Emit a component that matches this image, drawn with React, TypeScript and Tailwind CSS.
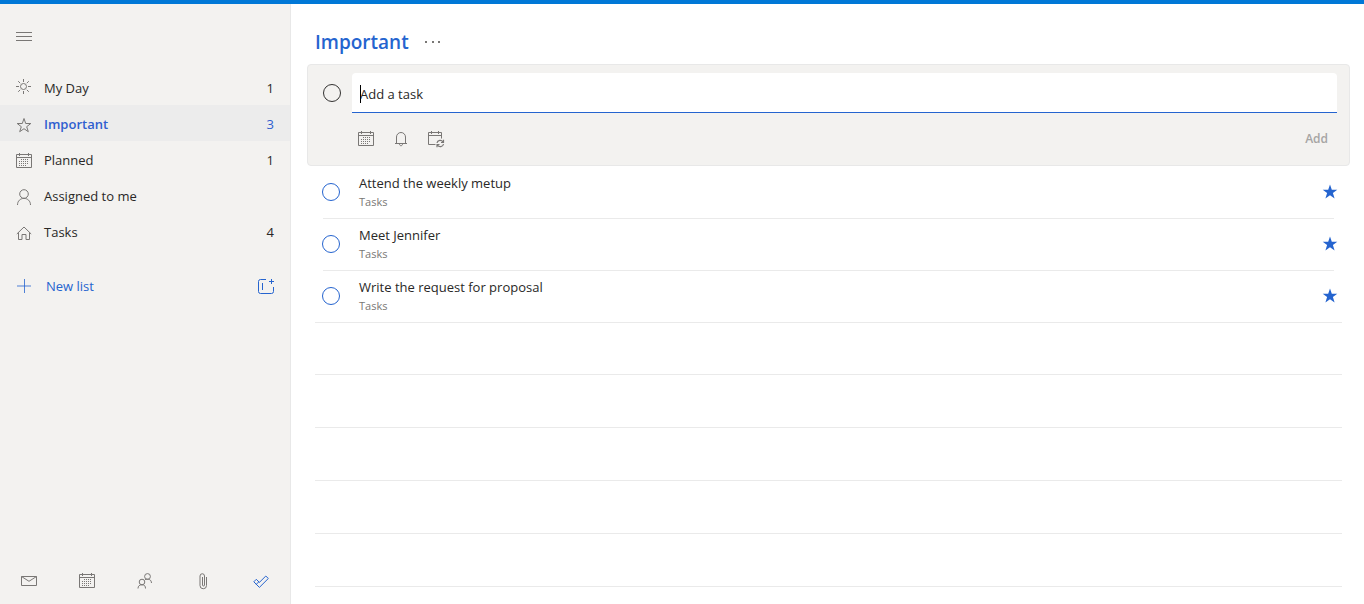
import { useState, ReactNode, FormEvent } from "react";

type ListItem = {
  name: string;
  count?: number;
  icon: ReactNode;
};

type Task = {
  title: string;
  list: string;
};

const DOTS = [
  [6, 6], [8, 6], [10, 6], [12, 6],
  [4, 8], [6, 8], [8, 8], [10, 8], [12, 8],
  [4, 10], [6, 10], [8, 10], [10, 10], [12, 10],
  [4, 12], [6, 12], [8, 12], [10, 12],
];

function Icon({ children }: { children: ReactNode }) {
  return (
    <svg
      width="16"
      height="16"
      viewBox="0 0 16 16"
      fill="none"
      stroke="currentColor"
      strokeWidth="1"
      className="shrink-0 overflow-visible"
      aria-hidden="true"
    >
      {children}
    </svg>
  );
}

const MenuIcon = () => (
  <Icon>
    <path d="M0 3.5h16M0 7.5h16M0 11.5h16" />
  </Icon>
);

const SunIcon = () => (
  <Icon>
    <circle cx="7.5" cy="5.5" r="3" />
    <path d="M7.5-2v3M7.5 10v3M0 5.5h3M12 5.5h3M2.2.2l2 2M10.8 8.8l2 2M12.8.2l-2 2M4.2 8.8l-2 2" />
  </Icon>
);

const StarIcon = () => (
  <Icon>
    <path d="M8 1.500l1.700 5h5.100l-4.100 3.200 1.600 5L8 11.700l-4.300 3 1.600-5-4.100-3.200h5.100z" />
  </Icon>
);

const CalendarIcon = () => (
  <Icon>
    <path d="M.5 1.5h15v13H.5zM.5 4.5h15M3.5 0v3M12.5 0v3" />
    <g fill="currentColor" stroke="none">
      {DOTS.map(([x, y]) => (
        <rect key={`${x}-${y}`} x={x - 1} y={y} width="1" height="1" />
      ))}
    </g>
  </Icon>
);

const PersonIcon = () => (
  <Icon>
    <circle cx="8" cy="5" r="4.3" />
    <path d="M1.5 16c0-4 2.8-6.6 6.5-6.6s6.5 2.6 6.5 6.6" />
  </Icon>
);

const HomeIcon = () => (
  <Icon>
    <path d="M.8 9L8 2l7.200 7M2.500 7.500v7h3.500v-5h4v5h3.500v-7" />
  </Icon>
);

const PlusIcon = () => (
  <Icon>
    <path d="M1 7h14" strokeOpacity=".8" />
    <path d="M8.500 0v14" strokeOpacity=".8" />
  </Icon>
);

const NewGroupIcon = () => (
  <Icon>
    <path d="M8 .5H2.500a2 2 0 0 0-2 2v10a2 2 0 0 0 2 2h11a2 2 0 0 0 2-2V8M4.500 4v7M13.500 0v5M11 2.500h5" />
  </Icon>
);

const BellIcon = () => (
  <Icon>
    <path d="M2 12.500h12M3.500 12.500V6a4.500 4.500 0 0 1 9 0v6.500M6.500 13c0 2.300 3 2.300 3 0" />
  </Icon>
);

const RepeatIcon = () => (
  <Icon>
    <path d="M7.500 13.500h-7v-12h13v6M.5 4.500h13M3.500 0v3M10.500 0v3" />
    <path
      d="M9 12c.5-3 4.500-3.500 6-1M15.500 8.800v2.700H13M15.500 13c-.5 3-4.500 3.500-6 1M9 16.200v-2.700h2.500"
      strokeWidth="1.200"
    />
  </Icon>
);

const MailIcon = () => (
  <Icon>
    <path d="M.5 3.500h15v9H.5zM.5 3.500L8 8.300l7.500-4.800" />
  </Icon>
);

const PeopleIcon = () => (
  <Icon>
    <circle cx="10.500" cy="3.500" r="2.900" />
    <path d="M8 6.500c3.500-1 6.300 0 6.500 3.500" />
    <circle cx="5" cy="9" r="2.800" />
    <path d="M1 15.500c0-2.600 1.600-3.700 4-3.700s3.500 1.100 3.500 3.700" />
  </Icon>
);

const ClipIcon = () => (
  <Icon>
    <path d="M11.500 4v8.500a3 3 0 0 1-6.500 0V3a2.200 2.200 0 0 1 4.500 0v9a1 1 0 0 1-2 0V4" />
  </Icon>
);

const CheckIcon = () => (
  <Icon>
    <path d="M.8 8.800l2.500-2.500 3.100 3.100 6.400-6.400 2.500 2.500-8.900 8.900zM3.300 11.300l2.600-2.600" />
  </Icon>
);

const FilledStar = () => (
  <svg width="16" height="16" viewBox="0 0 16 16" fill="currentColor" aria-hidden="true">
    <path d="M8 .5l1.800 5.300h5.500l-4.400 3.300 1.700 5.400L8 11.200l-4.600 3.300 1.700-5.400L.7 5.800h5.500z" />
  </svg>
);

const lists: ListItem[] = [
  { name: "My Day", count: 1, icon: <SunIcon /> },
  { name: "Important", count: 3, icon: <StarIcon /> },
  { name: "Planned", count: 1, icon: <CalendarIcon /> },
  { name: "Assigned to me", icon: <PersonIcon /> },
  { name: "Tasks", count: 4, icon: <HomeIcon /> },
];

const apps = [
  { name: "Mail", icon: <MailIcon /> },
  { name: "Calendar", icon: <CalendarIcon /> },
  { name: "People", icon: <PeopleIcon /> },
  { name: "Files", icon: <ClipIcon /> },
  { name: "To Do", icon: <CheckIcon />, active: true },
];

function Sidebar() {
  return (
    <aside className="flex w-[291px] shrink-0 flex-col border-r border-[#e8e8e8] bg-[#f3f2f0]">
      <div className="flex h-[65px] items-center px-4">
        <button aria-label="Toggle menu" className="text-[#797775]">
          <MenuIcon />
        </button>
      </div>

      <nav>
        {lists.map((item) => {
          const active = item.name === "Important";
          return (
            <a
              key={item.name}
              href="#"
              className={`flex h-9 items-center gap-3 px-4 pt-1 text-[13px] ${
                active ? "bg-[#ececec] text-[#2f5fd0]" : "text-[#292827]"
              }`}
            >
              <span className="text-[#797775]">{item.icon}</span>
              <span className={active ? "flex-1 font-semibold" : "flex-1"}>{item.name}</span>
              <span>{item.count}</span>
            </a>
          );
        })}
      </nav>

      <div className="mt-[18px] flex h-9 items-center justify-between px-4 pt-1 text-[#2564cf]">
        <button className="flex items-center gap-3.5 text-[13px]">
          <PlusIcon />
          New list
        </button>
        <button aria-label="New group">
          <NewGroupIcon />
        </button>
      </div>

      {/* App switcher */}
      <div className="mt-auto grid h-12 grid-cols-5 pt-0.5">
        {apps.map((app) => (
          <button
            key={app.name}
            aria-label={app.name}
            className={`flex items-center justify-center ${
              app.active ? "text-[#2564cf]" : "text-[#797775]"
            }`}
          >
            {app.icon}
          </button>
        ))}
      </div>
    </aside>
  );
}

function TaskRow({ task, last }: { task: Task; last: boolean }) {
  return (
    <li className={last ? "mx-2" : "mx-4"}>
      <div
        className={`flex h-[52px] items-center border-b border-[#eaeaea] pb-0.5 ${
          last ? "px-2" : ""
        }`}
      >
        <input
          type="checkbox"
          aria-label={task.title}
          className="-ml-px size-[18px] shrink-0 appearance-none rounded-full border border-[#2564cf] checked:bg-[#2564cf]"
        />
        <div className="ml-[19px] flex-1">
          <p className="text-[13px] leading-5 text-[#292827]">{task.title}</p>
          <p className="mt-px text-[11px] leading-4 text-[#797775]">{task.list}</p>
        </div>
        <button aria-label="Remove importance" className="-mr-1 text-[#2564cf]">
          <FilledStar />
        </button>
      </div>
    </li>
  );
}

export default function App() {
  const [draft, setDraft] = useState("");
  const [tasks, setTasks] = useState<Task[]>([
    { title: "Attend the weekly metup", list: "Tasks" },
    { title: "Meet Jennifer", list: "Tasks" },
    { title: "Write the request for proposal", list: "Tasks" },
  ]);

  const addTask = (event: FormEvent) => {
    event.preventDefault();
    if (!draft.trim()) return;
    setTasks([{ title: draft.trim(), list: "Tasks" }, ...tasks]);
    setDraft("");
  };

  return (
    <div className="flex min-h-screen flex-col border-t-4 border-[#0078d7] bg-white font-['Open_Sans','Noto_Sans',sans-serif]">
      <div className="flex flex-1">
        <Sidebar />

        <main className="flex-1 pl-4 pr-3.5">
          <header className="flex h-[60px] items-center gap-3.5 px-2 pt-4">
            <h1 className="text-[19px] font-semibold text-[#2564cf]">Important</h1>
            <button aria-label="List options" className="text-[#797775]">
              <svg width="20" height="16" viewBox="0 0 20 16" fill="currentColor" aria-hidden="true">
                <path d="M2 7h2v2H2zM9 7h2v2H9zM15 7h2v2h-2z" />
              </svg>
            </button>
          </header>

          {/* Add task card */}
          <form
            onSubmit={addTask}
            className="mb-px rounded border border-[#e8e8e8] bg-[#f3f2f0] pb-2.5 pl-[15px] pr-3 pt-2"
          >
            <div className="flex items-center">
              <input
                type="checkbox"
                aria-label="Mark new task complete"
                className="size-[18px] shrink-0 appearance-none rounded-full border border-[#323130]"
              />
              <div className="relative ml-[11px] flex-1">
                <input
                  type="text"
                  aria-label="Add a task"
                  placeholder="Add a task"
                  value={draft}
                  onChange={(e) => setDraft(e.target.value)}
                  className="block h-10 w-full rounded-t-sm border-b border-[#2564cf] bg-white px-2 pb-px pt-1 text-[13px] text-[#292827] outline-none placeholder:text-[#292827]"
                />
                {!draft && <span className="absolute left-2 top-3 h-[18px] w-px bg-black" />}
              </div>
            </div>
            <div className="mt-2.5 flex h-8 items-center gap-[19px] pl-[35px] pr-[9px] text-[#797775]">
              <button type="button" aria-label="Add due date">
                <CalendarIcon />
              </button>
              <button type="button" aria-label="Remind me">
                <BellIcon />
              </button>
              <button type="button" aria-label="Repeat">
                <RepeatIcon />
              </button>
              <button type="submit" className="ml-auto text-xs font-semibold text-[#a6a5a4]">
                Add
              </button>
            </div>
          </form>

          <ul>
            {tasks.map((task, i) => (
              <TaskRow key={task.title} task={task} last={i === tasks.length - 1} />
            ))}
          </ul>

          {/* Empty ruled lines */}
          <div className="mx-2">
            {[0, 1, 2, 3, 4].map((n) => (
              <div key={n} className="h-[53px] border-b border-[#eaeaea] first:h-[52px]" />
            ))}
          </div>
        </main>
      </div>
    </div>
  );
}
